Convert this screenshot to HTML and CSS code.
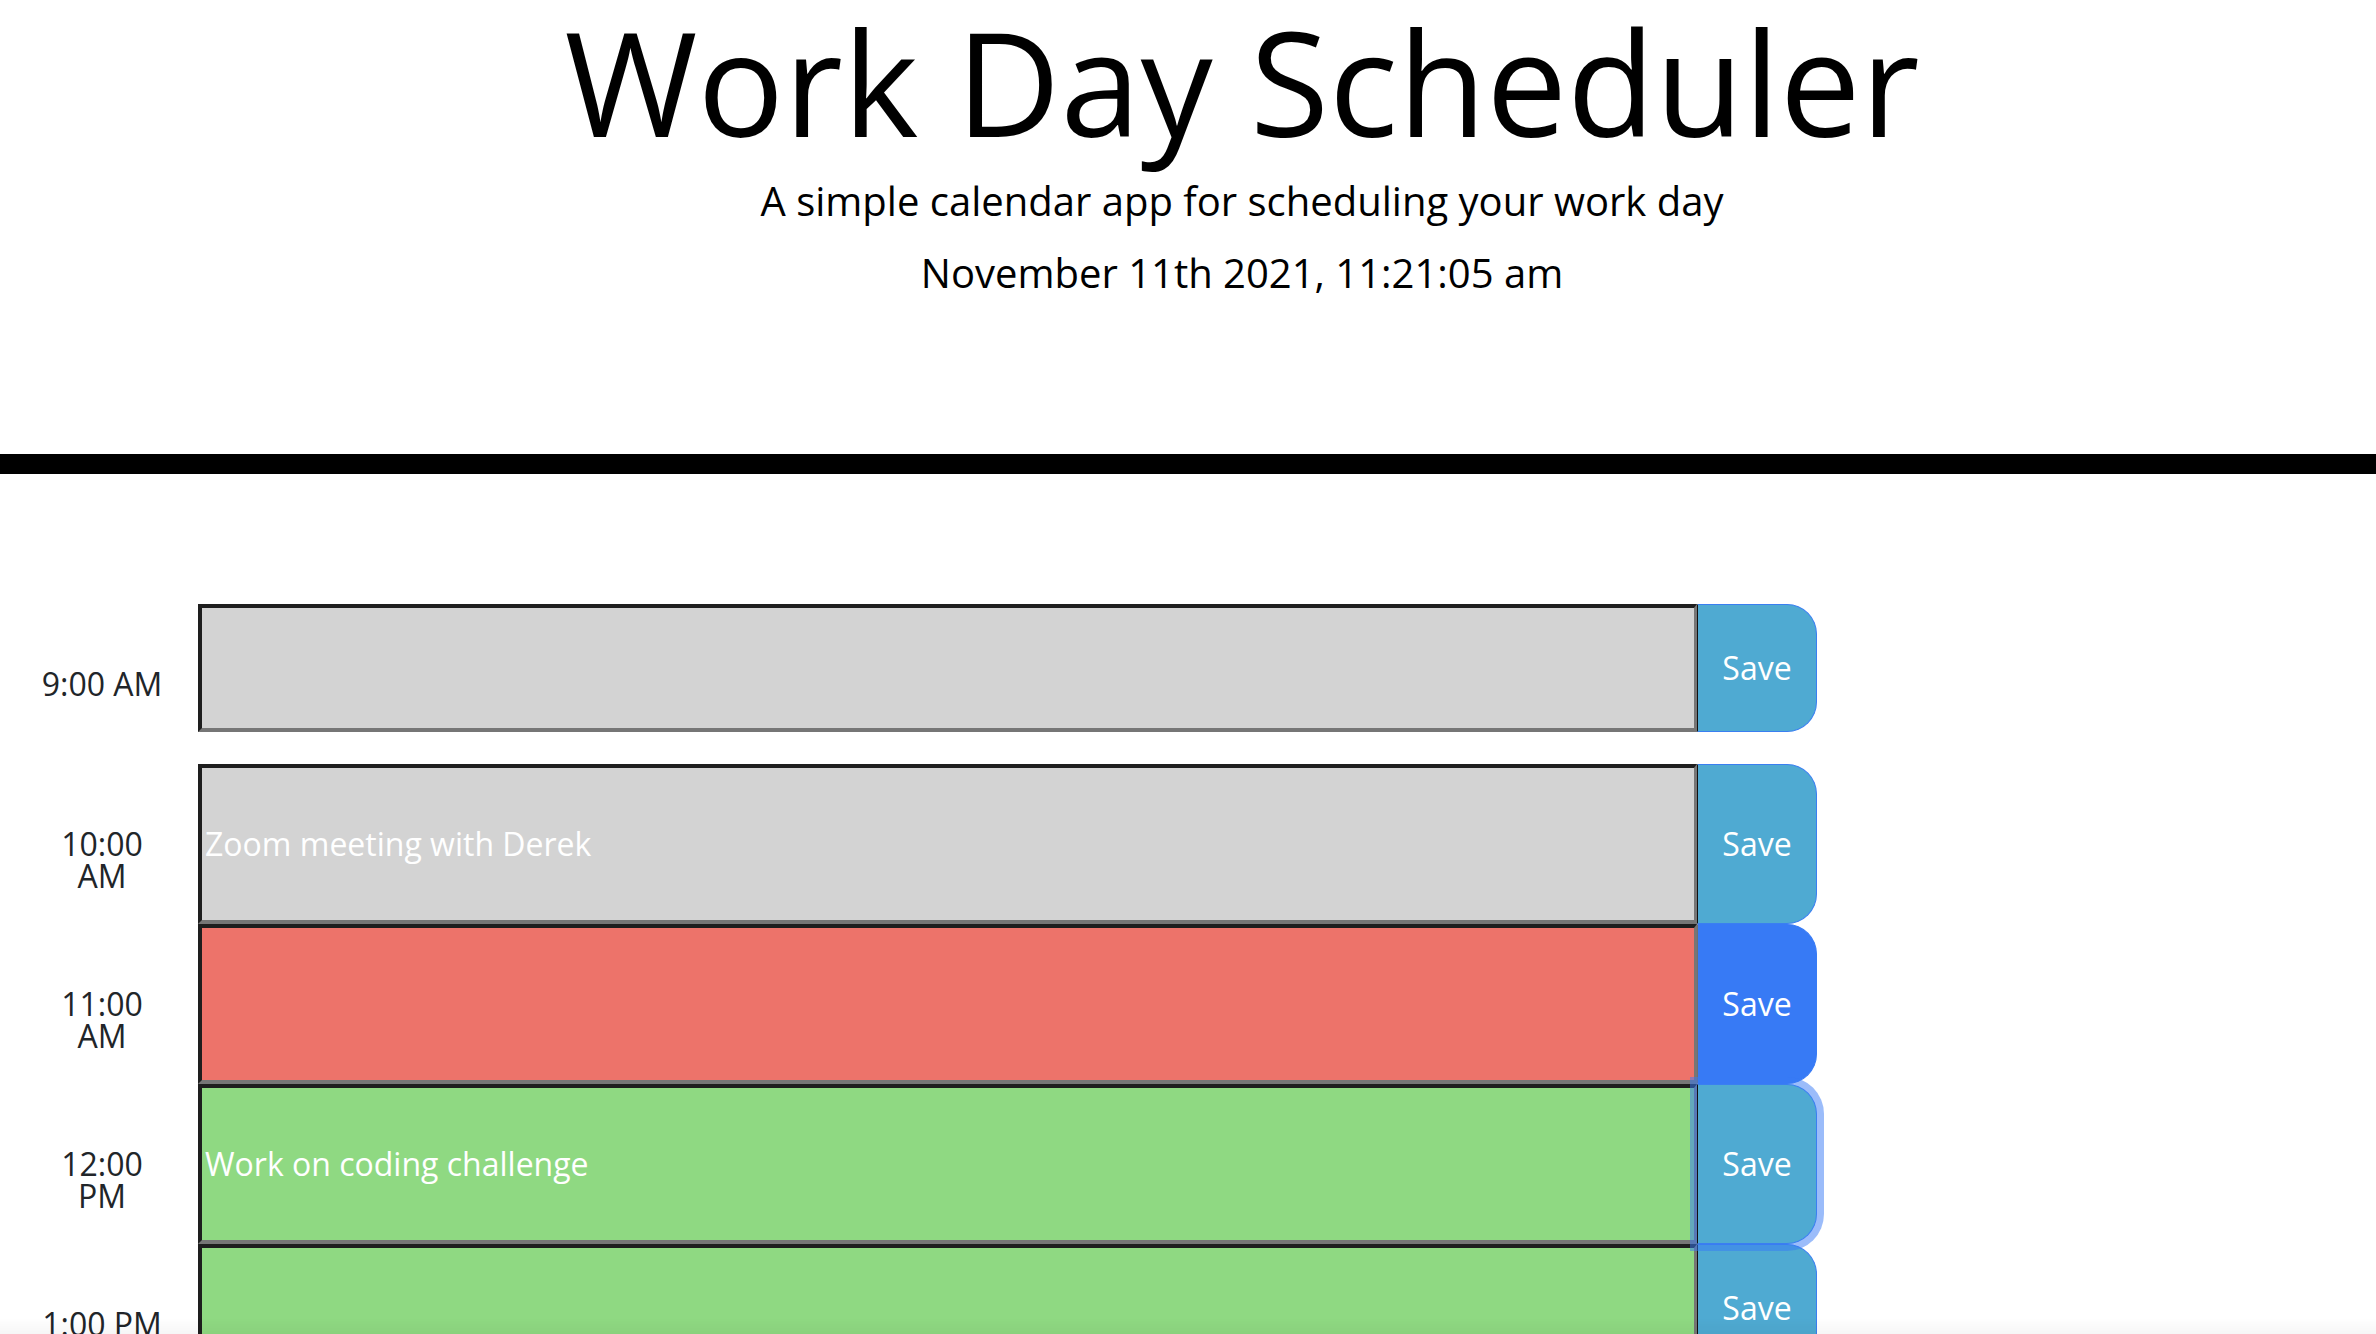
FILE: index.html
```html
<!DOCTYPE html>
<html lang="en">
<head>
<meta charset="utf-8">
<title>Work Day Scheduler</title>
<link rel="stylesheet" href="styles.css">
</head>
<body>
<header class="jumbotron">
  <h1 class="title">Work Day Scheduler</h1>
  <p class="lead">A simple calendar app for scheduling your work day</p>
  <p class="lead current-day">November 11th 2021, 11:21:05 am</p>
</header>
<main class="schedule">
  <div class="time-block short">
    <div class="hour">9:00 AM</div>
    <textarea class="description past"></textarea>
    <button class="saveBtn">Save</button>
  </div>
  <div class="time-block">
    <div class="hour">10:00 AM</div>
    <textarea class="description past">Zoom meeting with Derek</textarea>
    <button class="saveBtn">Save</button>
  </div>
  <div class="time-block">
    <div class="hour">11:00 AM</div>
    <textarea class="description present"></textarea>
    <button class="saveBtn active">Save</button>
  </div>
  <div class="time-block">
    <div class="hour">12:00 PM</div>
    <textarea class="description future">Work on coding challenge</textarea>
    <button class="saveBtn focused">Save</button>
  </div>
  <div class="time-block short">
    <div class="hour">1:00 PM</div>
    <textarea class="description future"></textarea>
    <button class="saveBtn">Save</button>
  </div>
  <div class="time-block short">
    <div class="hour">2:00 PM</div>
    <textarea class="description future"></textarea>
    <button class="saveBtn">Save</button>
  </div>
  <div class="time-block short">
    <div class="hour">3:00 PM</div>
    <textarea class="description future"></textarea>
    <button class="saveBtn">Save</button>
  </div>
  <div class="time-block short">
    <div class="hour">4:00 PM</div>
    <textarea class="description future"></textarea>
    <button class="saveBtn">Save</button>
  </div>
  <div class="time-block short">
    <div class="hour">5:00 PM</div>
    <textarea class="description future"></textarea>
    <button class="saveBtn">Save</button>
  </div>
</main>
</body>
</html>
```
FILE: styles.css
```css
* {
  box-sizing: border-box;
}

body {
  margin: 0;
  font-family: "Open Sans", "Noto Sans", sans-serif;
  color: #000;
  background: #fff;
}

body::after {
  content: "";
  position: fixed;
  left: 0;
  right: 0;
  bottom: 0;
  height: 16px;
  background: linear-gradient(rgba(0, 0, 0, 0), rgba(0, 0, 0, 0.035));
  pointer-events: none;
}

.jumbotron {
  height: 474px;
  padding: 1px 0 0 108px;
  border-bottom: 20px solid #000;
  text-align: center;
}

.title {
  margin: 0;
  font-size: 144px;
  line-height: 160px;
  font-weight: 400;
}

.lead {
  margin: 16px 0 0;
  font-size: 40px;
  line-height: 48px;
}

.current-day {
  margin-top: 24px;
}

.schedule {
  padding-top: 130px;
}

.time-block {
  display: flex;
  height: 160px;
  align-items: stretch;
}

.time-block.short {
  align-items: flex-start;
}

.time-block.short .description,
.time-block.short .saveBtn {
  height: 128px;
}

.hour {
  width: 130px;
  margin: 0 31px 0 37px;
  padding-top: 64px;
  font-size: 32px;
  line-height: 32px;
  text-align: center;
  color: #212529;
}

.description {
  width: 1499px;
  margin: 0;
  border: 4px solid;
  border-right-width: 3px;
  border-color: #1e1e1e #767676 #767676 #1e1e1e;
  padding: 60px 2px 0 3px;
  font: 32px/32px "Open Sans", "Noto Sans", sans-serif;
  color: #fff;
  resize: none;
  overflow: hidden;
  outline: none;
}

.past {
  background: #d3d3d3;
}

.present {
  background: #ed736a;
}

.future {
  background: #8fd982;
}

.saveBtn {
  width: 120px;
  margin: 0;
  padding: 0;
  border: 1px solid #3a7ff1;
  border-left-color: #111;
  border-radius: 0 30px 30px 0;
  background: #4faad2;
  color: #fff;
  font: 32px/32px "Open Sans", "Noto Sans", sans-serif;
}

.saveBtn.active {
  background: #377af5;
  border-color: #377af5;
  border-left-color: #6f6f6f;
}

.saveBtn.focused {
  position: relative;
  z-index: 1;
  box-shadow: 0 0 0 7px rgba(55, 122, 245, 0.5);
}
```
